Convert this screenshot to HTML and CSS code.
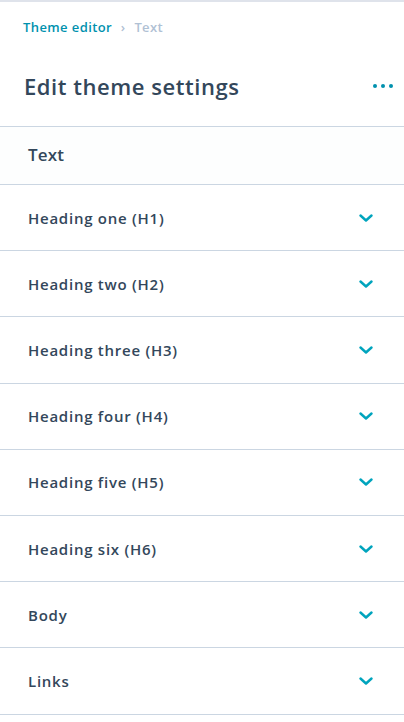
FILE: index.html
```html
<!DOCTYPE html>
<html lang="en">
<head>
    <meta charset="UTF-8">
    <meta name="viewport" content="width=device-width, initial-scale=1.0">
    <title>Edit theme settings</title>
    <link rel="stylesheet" href="styles.css">
</head>
<body>
    <div class="panel">
        <header class="panel-header">
            <nav class="breadcrumb">
                <a href="#">Theme editor</a>
                <span class="sep">&rsaquo;</span>
                <span class="current">Text</span>
            </nav>
            <div class="title-row">
                <h1>Edit theme settings</h1>
                <button class="more" aria-label="More">
                    <span></span><span></span><span></span>
                </button>
            </div>
        </header>

        <div class="section-title">Text</div>

        <ul class="groups">
            <li><span>Heading one (H1)</span><svg class="chevron" viewBox="0 0 14 8"><path d="M1.5 1.5 L7 6.5 L12.5 1.5"/></svg></li>
            <li><span>Heading two (H2)</span><svg class="chevron" viewBox="0 0 14 8"><path d="M1.5 1.5 L7 6.5 L12.5 1.5"/></svg></li>
            <li><span>Heading three (H3)</span><svg class="chevron" viewBox="0 0 14 8"><path d="M1.5 1.5 L7 6.5 L12.5 1.5"/></svg></li>
            <li><span>Heading four (H4)</span><svg class="chevron" viewBox="0 0 14 8"><path d="M1.5 1.5 L7 6.5 L12.5 1.5"/></svg></li>
            <li><span>Heading five (H5)</span><svg class="chevron" viewBox="0 0 14 8"><path d="M1.5 1.5 L7 6.5 L12.5 1.5"/></svg></li>
            <li><span>Heading six (H6)</span><svg class="chevron" viewBox="0 0 14 8"><path d="M1.5 1.5 L7 6.5 L12.5 1.5"/></svg></li>
            <li><span>Body</span><svg class="chevron" viewBox="0 0 14 8"><path d="M1.5 1.5 L7 6.5 L12.5 1.5"/></svg></li>
            <li><span>Links</span><svg class="chevron" viewBox="0 0 14 8"><path d="M1.5 1.5 L7 6.5 L12.5 1.5"/></svg></li>
        </ul>
    </div>
</body>
</html>
```

FILE: styles.css
```css
body {
    font-family: "Open Sans", Arial, sans-serif;
    margin: 0;
    padding: 0;
    background-color: white;
    color: #33475b;
}

/* Panneau */
.panel {
    border-top: 2px solid #dfe3eb;
}

/* En-tete */
.panel-header {
    padding: 15px 11px 0 23px;
    height: 109px;
    border-bottom: 1px solid #cbd6e2;
}

.breadcrumb {
    font-size: 13px;
    font-weight: 600;
    letter-spacing: 0.4px;
    height: 20px;
    line-height: 20px;
}

.breadcrumb a {
    color: #0091ae;
    text-decoration: none;
}

.breadcrumb .sep {
    color: #b0c1d4;
    margin: 0 5px;
}

.breadcrumb .current {
    color: #b0c1d4;
}

.title-row {
    display: flex;
    justify-content: space-between;
    align-items: center;
    margin-top: 34px;
}

.title-row h1 {
    margin: 0 0 0 1px;
    font-size: 22px;
    font-weight: 600;
    letter-spacing: 0.55px;
    line-height: 30px;
}

.more {
    display: flex;
    gap: 4px;
    background: none;
    border: none;
    padding: 0;
    cursor: pointer;
}

.more span {
    width: 4px;
    height: 4px;
    border-radius: 50%;
    background-color: #0091ae;
}

/* Section */
.section-title {
    padding: 0 28px;
    height: 57px;
    line-height: 56px;
    font-size: 17px;
    font-weight: 600;
    letter-spacing: 0.2px;
    border-bottom: 1px solid #cbd6e2;
    background-color: #fdfefe;
}

.groups {
    list-style: none;
    margin: 0;
    padding: 0;
}

.groups li {
    display: flex;
    justify-content: space-between;
    align-items: center;
    height: 65.2px;
    padding: 0 31px 0 28px;
    border-bottom: 1px solid #cbd6e2;
    font-size: 15px;
    font-weight: 600;
    letter-spacing: 0.75px;
    cursor: pointer;
}

.chevron {
    width: 14px;
    height: 8px;
    fill: none;
    stroke: #00a4bd;
    stroke-width: 2.4;
    stroke-linecap: round;
    stroke-linejoin: round;
}
```
